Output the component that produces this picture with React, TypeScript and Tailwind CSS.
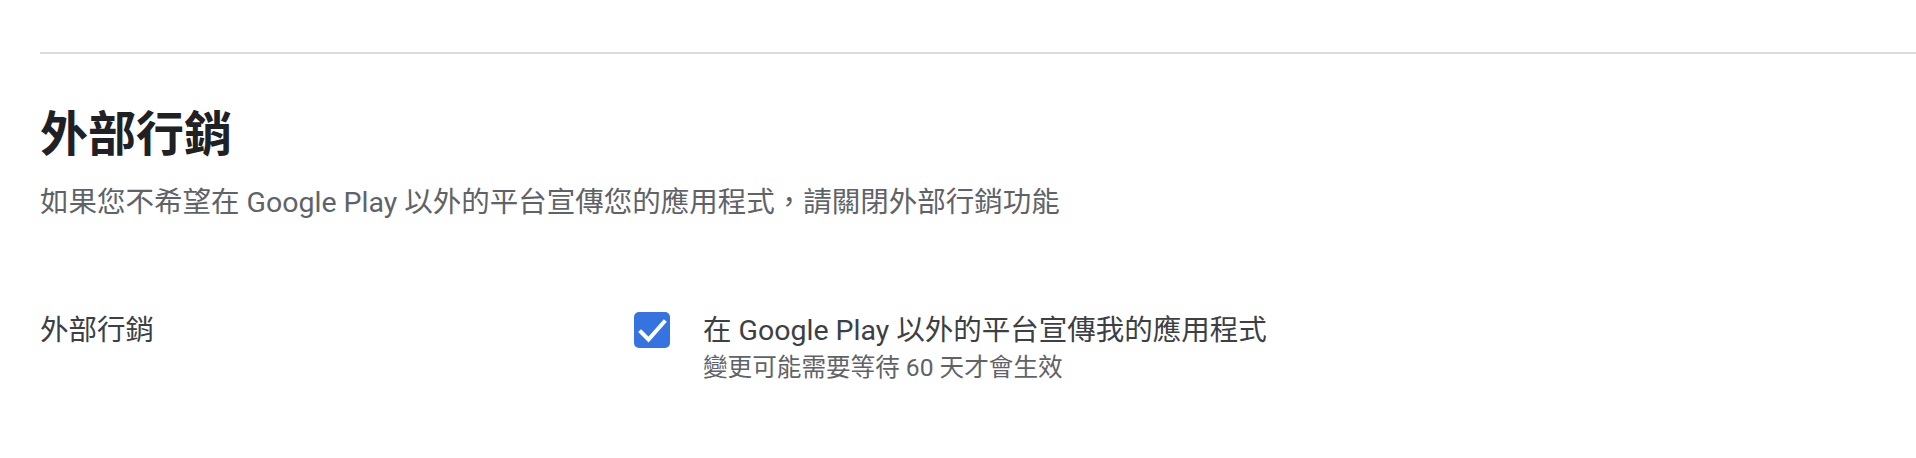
import { useState } from "react";

const FONT = { fontFamily: 'Roboto, "Noto Sans CJK TC", "Noto Sans CJK SC", sans-serif' };

export default function App() {
  const [checked, setChecked] = useState(true);

  return (
    <div className="w-[1916px] h-[458px] bg-white pl-[40px] pt-[52px]" style={FONT}>
      <div className="h-[2px] bg-[#dadce0]" />

      {/* 標題 */}
      <h2 className="mt-[53px] text-[48px] leading-[56px] font-bold text-[#202124]">外部行銷</h2>
      <p className="mt-[20px] text-[28.5px] leading-[40px] text-[#5f6368]">
        如果您不希望在 Google Play 以外的平台宣傳您的應用程式，請關閉外部行銷功能
      </p>

      {/* 設定列 */}
      <div className="mt-[90px] flex">
        <div className="w-[594px] shrink-0 text-[28.5px] leading-[36px] text-[#3c4043]">外部行銷</div>
        <div className="flex gap-[33px]">
          <button
            onClick={() => setChecked(!checked)}
            className={`mt-[-1px] w-[36px] h-[36px] rounded-[5px] shrink-0 flex items-center justify-center ${
              checked ? "bg-[#3574e0]" : "border-[3px] border-[#5f6368] bg-white"
            }`}
          >
            {checked && (
              <svg width="36" height="36" viewBox="0 0 36 36" fill="none">
                <path d="M7 20l7.5 7.5L30 10" stroke="white" strokeWidth={4} strokeLinecap="square" />
              </svg>
            )}
          </button>
          <div>
            <div className="text-[28.5px] leading-[36px] text-[#3c4043]">在 Google Play 以外的平台宣傳我的應用程式</div>
            <div className="text-[24.6px] leading-[38px] text-[#5f6368]">變更可能需要等待 60 天才會生效</div>
          </div>
        </div>
      </div>
    </div>
  );
}
